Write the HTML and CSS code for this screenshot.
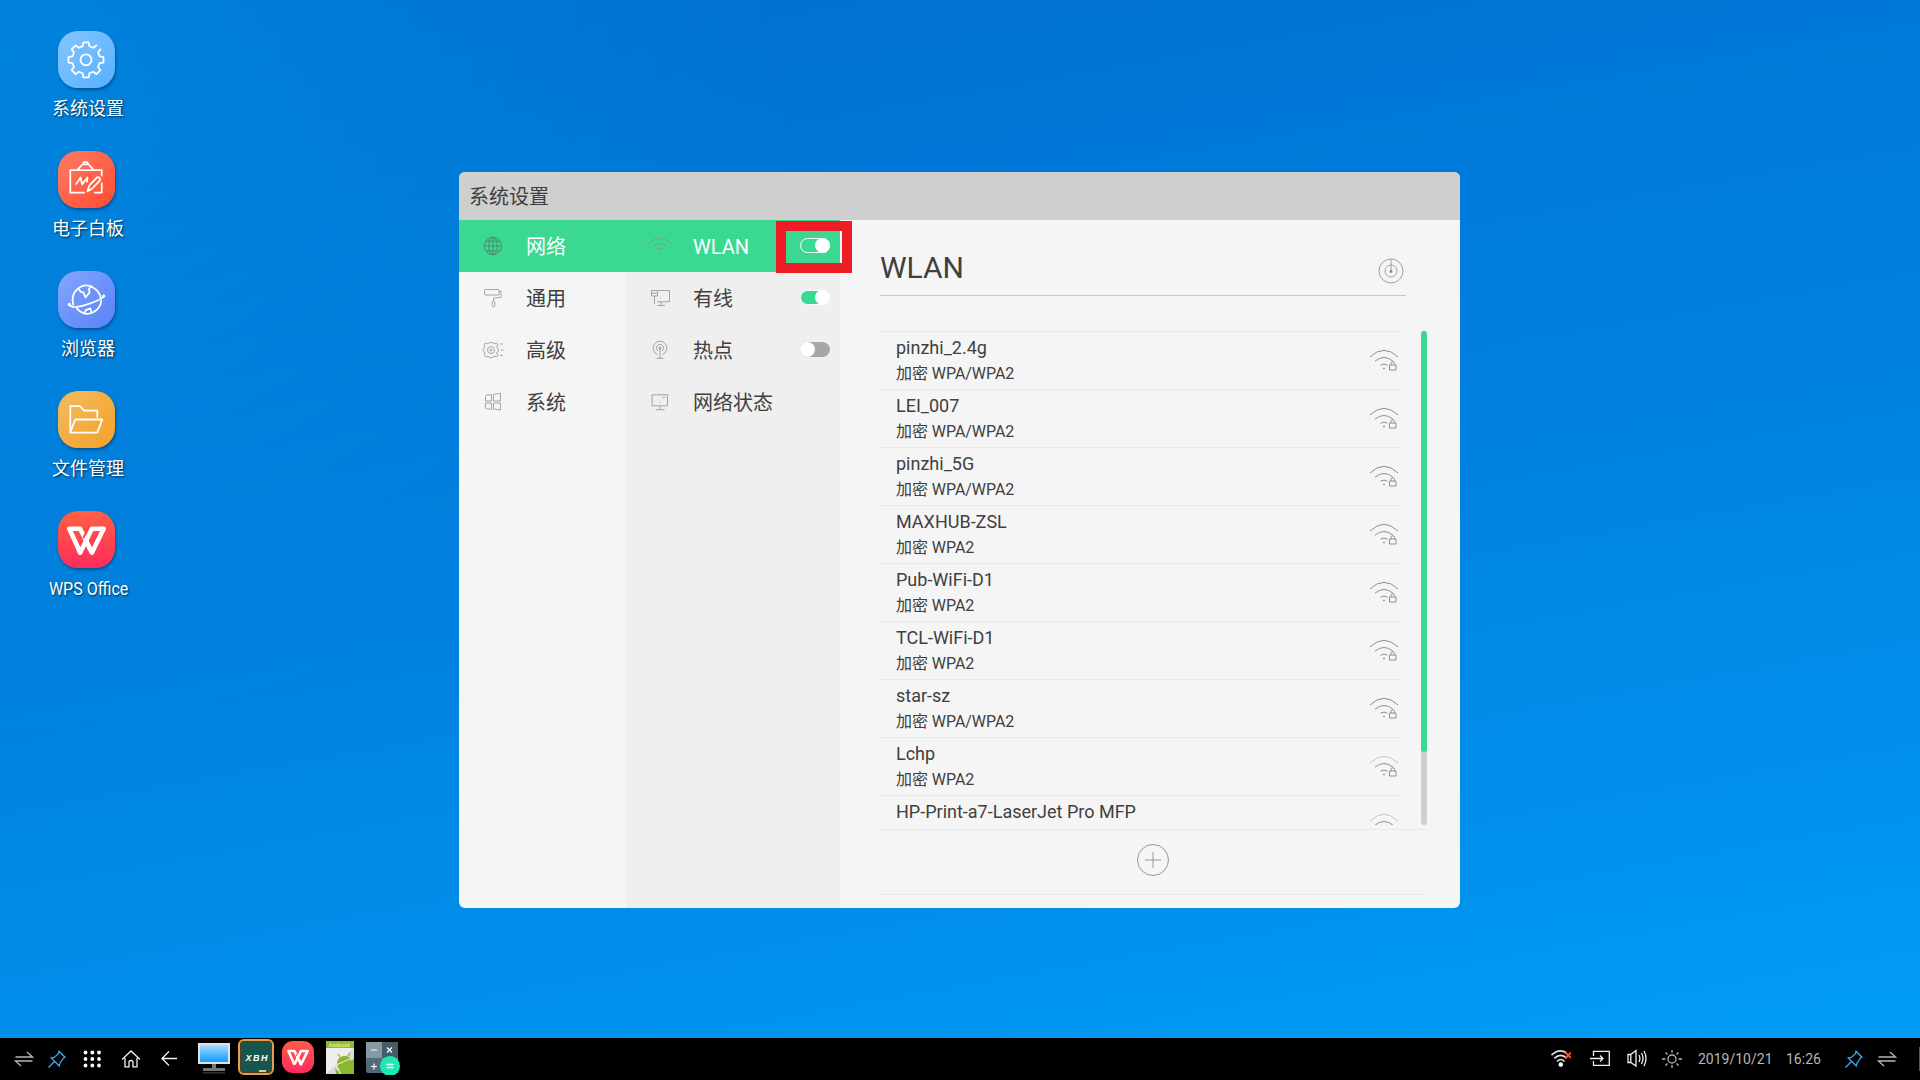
FILE: index.html
```html
<!DOCTYPE html>
<html lang="zh-CN">
<head>
<meta charset="utf-8">
<title>系统设置</title>
<link rel="stylesheet" href="styles.css">
</head>
<body>
<svg class="defs" aria-hidden="true">
  <symbol id="wifi-lock" viewBox="0 0 30 22">
    <path class="far" d="M1 8Q15-5.400 29 8"/>
    <path d="M6 12.200Q15 4.800 24 12.200M11.500 16.200Q15 14 18.500 16.200"/>
    <circle cx="15" cy="19.500" r=".6"/>
    <path d="M20.500 16h6.500v5h-6.500zM22 16v-1.500q0-1.700 1.750-1.700t1.750 1.700V16"/>
  </symbol>
  <symbol id="swap" viewBox="0 0 20 20"><path d="M1.500 8h17L13 3M18.500 12H1.500L7 17"/></symbol>
  <symbol id="pin" viewBox="0 0 20 20"><path d="M12 2.200l6 6-1.700 1-3.300 5-.8 2.800-8-8 3-.6 4.200-3.700zM7.500 12.500L1.500 18.500"/></symbol>
  <symbol id="wps" viewBox="0 0 58 58">
    <g fill="none" stroke="#fff" stroke-width="4.600" stroke-linejoin="round">
      <path d="M34.500 42L22.500 18H11.500L22.500 42"/>
      <path d="M31.500 16L26 27" stroke="#fb4a49" stroke-width="2"/>
      <path d="M22.500 42.500L34.500 18H46.500L34.500 42.500L31 35.500M22.500 42.500L21 39"/>
    </g>
  </symbol>
</svg>
<main class="desktop">
  <nav class="shortcuts">
    <a class="shortcut"><span class="tile tile-settings"><svg viewBox="0 0 58 58"><g transform="translate(28.500 29.300)"><path d="M14.600-10.600L12.200-7.400L13.800-3.400L17.800-2.800V2.800L13.800 3.400L12.200 7.400L14.600 10.600L10.600 14.600L7.400 12.200L3.400 13.800L2.800 17.800H-2.800L-3.400 13.800L-7.400 12.200L-10.600 14.600L-14.600 10.600L-12.200 7.400L-13.800 3.400L-17.800 2.800V-2.800L-13.800-3.400L-12.200-7.400L-14.600-10.600L-10.600-14.600L-7.400-12.200L-3.400-13.800L-2.800-17.800H2.800L3.400-13.800L7.400-12.200L10.600-14.600"/><circle r="5.600"/></g></svg></span><span class="label">系统设置</span></a>
    <a class="shortcut"><span class="tile tile-board"><svg viewBox="0 0 58 58"><path d="M44.500 25v-5.500h-32v22.800h14M44.500 33v9.300h-7M20 19l5-5.500h6l5 5.500M25.500 13.500q0-2.500 2.500-2.500t2.500 2.500M18.500 33.500l4.500-6.500 1.500 7 5.500-7-.5 4.500M30 41l2-6 7.500-8q1.500-.8 2.700.4t.3 2.700l-7.500 8z"/></svg></span><span class="label">电子白板</span></a>
    <a class="shortcut"><span class="tile tile-browser"><svg viewBox="0 0 58 58"><path d="M15.500 34Q13 25 19 19q8-7.500 17-2 6 3.500 7.500 10M19 38q8 8.500 17 4 7-3.500 8-11.500M11.500 34.500q3 4 15 .5 17-5 20-9M21 18l2 3 3 1 2 5 4-5-.5-4 3-2.500M27 43l1-3 5-2 1 4"/><circle cx="11.500" cy="34" r=".8"/><circle cx="46.500" cy="25.500" r=".8"/></svg></span><span class="label">浏览器</span></a>
    <a class="shortcut"><span class="tile tile-files"><svg viewBox="0 0 58 58"><path d="M12.500 42V15.500h10l4 4.500H40v6.500M12.500 42.300l5-13.300H45l-5 13.300z"/></svg></span><span class="label">文件管理</span></a>
    <a class="shortcut"><span class="tile tile-wps"><svg><use href="#wps"/></svg></span><span class="label condensed">WPS Office</span></a>
  </nav>

  <section class="window">
    <header class="titlebar">系统设置</header>
    <div class="panes">
      <nav class="menu menu-main">
        <a class="item active"><svg class="ico" viewBox="0 0 22 22"><circle cx="11" cy="11" r="8.700"/><ellipse cx="11" cy="11" rx="4.300" ry="8.700"/><path d="M11 2.300v17.400M2.300 11h17.400M4 6.200h14M4 15.800h14"/></svg><span>网络</span></a>
        <a class="item"><svg class="ico" viewBox="0 0 22 22"><rect x="2.500" y="2.500" width="14.500" height="5.500" rx="1"/><path d="M17 4h2v6.300l-7.500 1V14M11.500 14q1.500 0 1.500 3t-1.500 3-1.500-3 1.500-3z"/></svg><span>通用</span></a>
        <a class="item"><svg class="ico" viewBox="0 0 22 22"><path d="M14.500 8l1.500-2-1.500-2-2.500 1-1.200-1.500H7.200L6 5 3.500 4 2 6.500 3 8 .8 11 3 14l-1 1.500L3.500 18 6 17l1.200 1.500h3.600L12 17l2.500 1 1.500-2-1.500-2L17 11zM18 5h3M19 11h2.500M18 16.500h3"/><circle cx="9" cy="11" r="3.500"/><circle cx="9" cy="11" r="1"/></svg><span>高级</span></a>
        <a class="item"><svg class="ico" viewBox="0 0 22 22"><path d="M3.500 5.500q0-1 1-1.200L9.500 3.500V10h-6zM11.500 3.300l7-1V10h-7zM3.500 12h6v6.300l-5-.6q-1-.2-1-1.200zM11.500 12h7v7l-7-1z"/></svg><span>系统</span></a>
      </nav>
      <nav class="menu menu-sub">
        <a class="item active"><svg class="ico faint" viewBox="0 0 22 22"><path d="M0.500 7.500Q11-1 21.500 7.500M4.500 11Q11 6 17.500 11M8 14q3-1.500 6 0"/><circle cx="11" cy="17.500" r=".4"/></svg><span class="latin">WLAN</span><i class="switch on-active"></i></a>
        <a class="item"><svg class="ico" viewBox="0 0 22 22"><path d="M9 3.500h11.500v11.300H8M2.500 3.500h6V9h-6zM2.500 6.200h6M5.500 9v8M12 15v3M8 18.500h8M11.500 10.800h.8"/></svg><span>有线</span><i class="switch on"></i></a>
        <a class="item"><svg class="ico" viewBox="0 0 22 22"><path d="M8.500 15.500A6.900 6.900 0 1 1 13.500 15.500M9 12a3.600 3.600 0 1 1 4 0M11 9v10M7.500 19.300h7"/><circle cx="11" cy="8.900" r="1"/></svg><span>热点</span><i class="switch"></i></a>
        <a class="item"><svg class="ico" viewBox="0 0 22 22"><path d="M3 3.800h15.500v11H3zM11 15v3.500M7 18.700h8.500M13.500 6.500h1.500M16 5.800v1M10.500 11h1"/></svg><span>网络状态</span></a>
      </nav>
      <section class="detail">
        <header class="detail-head"><h1>WLAN</h1><svg class="radar" viewBox="0 0 28 28"><circle cx="14" cy="14" r="12"/><circle cx="14" cy="14" r="6"/><path d="M14 2v12"/><circle class="dot" cx="14" cy="14.500" r="1.400"/></svg></header>
        <div class="scroller">
          <ul class="networks">
            <li><div><b>pinzhi_2.4g</b><small>加密 WPA/WPA2</small></div><svg class="signal"><use href="#wifi-lock"/></svg></li>
            <li><div><b>LEI_007</b><small>加密 WPA/WPA2</small></div><svg class="signal"><use href="#wifi-lock"/></svg></li>
            <li><div><b>pinzhi_5G</b><small>加密 WPA/WPA2</small></div><svg class="signal"><use href="#wifi-lock"/></svg></li>
            <li><div><b>MAXHUB-ZSL</b><small>加密 WPA2</small></div><svg class="signal"><use href="#wifi-lock"/></svg></li>
            <li><div><b>Pub-WiFi-D1</b><small>加密 WPA2</small></div><svg class="signal"><use href="#wifi-lock"/></svg></li>
            <li><div><b>TCL-WiFi-D1</b><small>加密 WPA2</small></div><svg class="signal"><use href="#wifi-lock"/></svg></li>
            <li><div><b>star-sz</b><small>加密 WPA/WPA2</small></div><svg class="signal"><use href="#wifi-lock"/></svg></li>
            <li><div><b>Lchp</b><small>加密 WPA2</small></div><svg class="signal weak"><use href="#wifi-lock"/></svg></li>
            <li><div><b>HP-Print-a7-LaserJet Pro MFP</b></div><svg class="signal weak"><use href="#wifi-lock"/></svg></li>
          </ul>
          <div class="track"><div class="thumb"></div></div>
        </div>
        <footer class="add"><svg viewBox="0 0 34 34"><circle cx="17" cy="17" r="15.500"/><path d="M9 17h16M17 9v16"/></svg></footer>
      </section>
    </div>
    <div class="callout"></div>
  </section>
</main>

<footer class="taskbar">
  <div class="keys">
    <svg class="key dim"><use href="#swap"/></svg>
    <svg class="key blue"><use href="#pin"/></svg>
    <svg class="key solid" viewBox="0 0 20 20"><circle cx="3.500" cy="3.500" r="1.900"/><circle cx="10.300" cy="3.500" r="1.900"/><circle cx="17" cy="3.500" r="1.900"/><circle cx="3.500" cy="10" r="1.900"/><circle cx="10.300" cy="10" r="1.900"/><circle cx="17" cy="10" r="1.900"/><circle cx="3.500" cy="16.500" r="1.900"/><circle cx="10.300" cy="16.500" r="1.900"/><circle cx="17" cy="16.500" r="1.900"/></svg>
    <svg class="key home" viewBox="0 0 20 20"><path d="M1 10.500l9-8.500 9 8.500M4 9v8.800h4v-4.300q0-2 2-2t2 2v4.300h4V9"/></svg>
    <svg class="key back" viewBox="0 0 20 20"><path d="M18 9.500H3M10 2.500L3 9.500l7 7"/></svg>
  </div>
  <div class="apps">
    <svg viewBox="0 0 36 36"><defs><linearGradient id="screen" x2="0" y2="1"><stop stop-color="#a8dcff"/><stop offset=".6" stop-color="#45b5ff"/><stop offset="1" stop-color="#179bff"/></linearGradient></defs><path d="M2 4h32v21H2z" fill="#dfe3e4"/><path d="M4 6h28v17H4z" fill="url(#screen)"/><path d="M16 25h4v4h-4z" fill="#777"/><path d="M7 29h22v3H7z" fill="#777"/><path d="M7 33h22v1.500H7z" fill="#333"/></svg>
    <svg viewBox="0 0 36 36"><rect x="1" y="1" width="34" height="34" rx="5" fill="#17564f" stroke="#e5a047" stroke-width="2"/><rect x="2.600" y="2.600" width="30.800" height="30.800" rx="3" fill="none" stroke="#5d3b17"/><path d="M21 32h7" stroke="#d8c9a2" stroke-width="2"/><text class="chalk" x="18.500" y="22" textLength="22">XBH</text></svg>
    <svg viewBox="0 0 36 36"><defs><linearGradient id="red" x2="0" y2="1"><stop stop-color="#ff5c45"/><stop offset="1" stop-color="#ff2b5f"/></linearGradient></defs><rect x="2" y="2" width="32" height="32" rx="11" fill="url(#red)"/><use href="#wps" x="2" y="2" width="32" height="32"/></svg>
    <svg viewBox="0 0 36 36"><path d="M4 2h28v33H4z" fill="#eee"/><path d="M4 2h28v7H4z" fill="#8fbd22"/><text class="droid" x="17" y="8.300">Android</text><path d="M4 35L32 9v26z" fill="#d3d3d3" opacity=".7"/><path d="M15 25q0-7 6.500-8 5-.5 7.500 3l-1 2 4-2v15H19z" fill="#8bb82b"/><path d="M14 26l16-7" stroke="#eee"/><path d="M18 18l-2-3M26 17l2-3" stroke="#8bb82b" stroke-width="1.200"/><path d="M14 35l-1-6 4 4v2z" fill="#8bb82b"/></svg>
    <svg viewBox="0 0 36 36"><path d="M2 3h16v16H2z" fill="#8799a5"/><path d="M18 3h16v16H18z" fill="#455d6b"/><path d="M2 19h16v15H4q-2 0-2-2z" fill="#526b79"/><path d="M18 19h16v15H18z" fill="#7a8f9c"/><path d="M7 11h6M7 27.500h6M10 24.500v6M23 8.500l5 5M28 8.500l-5 5" stroke="#fff" stroke-width="1.200"/><circle cx="26" cy="27" r="10" fill="#1de9b6"/><path d="M22.500 25.500h7M22.500 28.500h7" stroke="#fff" stroke-width="1.300"/></svg>
  </div>
  <div class="status">
    <svg class="key" viewBox="0 0 20 20"><path d="M0.500 6Q8.500-1 15.500 4M3.300 9.300q6.500-6 12.500 0M6 12.500q4-4 7.500 0" class="thick"/><circle cx="9.800" cy="15.500" r="1.700" fill="#fff"/><path d="M14.500 3.500l5.500 5.500M20 3.500L14.500 9" class="off"/></svg>
    <svg class="key input" viewBox="0 0 20 20"><path d="M3.500 7V2.300h15.800v14H3.500V12M0 9.500h13M10 6.500l3 3-3 3"/></svg>
    <svg class="key sound" viewBox="0 0 20 20"><path d="M1 5.500h2.800v8H1zM3.800 5.500L9 1.500v15.500l-5.200-3.500M12 6q1.800 3.500 0 7M14.500 4q3 5.500 0 11M17 2q4 7.500 0 15"/></svg>
    <svg class="key dim light" viewBox="0 0 20 20"><circle cx="10" cy="10" r="4"/><path d="M10 1v3M10 16v3M0 10h3.500M16.500 10H20M3.500 3.500l2 2M16.500 3.500l-2 2M3.500 16.500l2-2M16.500 16.500l-2-2"/></svg>
    <span class="date">2019/10/21</span><span class="time">16:26</span>
    <svg class="key blue"><use href="#pin"/></svg>
    <svg class="key dim last"><use href="#swap"/></svg>
    <i class="edge"></i>
  </div>
</footer>
</body>
</html>
```
FILE: styles.css
```css
* { box-sizing: border-box; }
body {
  margin: 0;
  width: 1920px;
  height: 1080px;
  overflow: hidden;
  display: flex;
  flex-direction: column;
  font-family: Roboto, "Noto Sans CJK SC", sans-serif;
  color: #404040;
}
svg { display: block; fill: none; flex: none; }
.defs { display: none; }

.desktop {
  height: 1038px;
  display: flex;
  align-items: flex-start;
  background:
    radial-gradient(ellipse 800px 700px at 0 5%, rgba(0, 138, 226, .75), rgba(0, 136, 222, 0)),
    linear-gradient(170deg, #006dcb 0%, #0078d7 25%, #0081de 50%, #008eea 75%, #009df6 100%);
}

.shortcuts { width: 459px; padding: 31px 0 0 28px; }
.shortcut {
  width: 120px;
  height: 120px;
  display: flex;
  flex-direction: column;
  align-items: center;
}
.tile {
  width: 57px;
  height: 57px;
  margin-right: 3px;
  border-radius: 20px;
  box-shadow: 1px 2px 3px rgba(0, 30, 70, .45);
}
.tile svg {
  width: 57px;
  height: 57px;
  stroke: #fff;
  stroke-width: 1.8;
  stroke-linejoin: round;
  stroke-linecap: round;
}
.tile-settings { background: linear-gradient(135deg, #83c5ff, #58b0ff); }
.tile-board { background: linear-gradient(135deg, #ff7b65, #ff4c30); }
.tile-browser { background: linear-gradient(135deg, #84a6ff, #5882f7); }
.tile-files { background: linear-gradient(135deg, #f4bb62, #f3a125); }
.tile-wps { background: linear-gradient(#ff6142, #ff2b5e); }
.label {
  margin-top: 8px;
  font-size: 18px;
  line-height: 26px;
  color: #fff;
  white-space: nowrap;
  text-shadow: 1px 1px 2px rgba(0, 0, 0, .7);
}
.condensed { margin-left: 1px; transform: scaleX(.89); }

.window {
  position: relative;
  width: 1001px;
  height: 736px;
  margin-top: 172px;
  border-radius: 6px;
  overflow: hidden;
  background: #f5f5f5;
}
.titlebar {
  height: 48px;
  padding-left: 10px;
  background: #cfcfcf;
  font-size: 20px;
  line-height: 50px;
}
.panes { display: flex; height: 688px; }
.menu-main { width: 167px; }
.menu-sub { width: 214px; background: #efefef; }
.item {
  height: 52px;
  display: flex;
  align-items: center;
  padding: 0 10px 1px 23px;
  font-size: 20px;
  line-height: 30px;
}
.item span { padding-top: 2px; }
.item .latin { padding-top: 3px; }
.active { background: #3bd891; color: #fff; }
.ico {
  width: 22px;
  height: 22px;
  margin-right: 22px;
  stroke: #909090;
  stroke-width: .8;
}
.active .ico { stroke: #4f7f68; }
.active .faint { stroke: #7d9a83; }
.switch {
  width: 30px;
  height: 15px;
  margin-left: auto;
  border-radius: 8px;
  background: #a7a7a7;
}
.switch::after {
  content: "";
  display: block;
  width: 15px;
  height: 15px;
  border-radius: 50%;
  background: #fff;
}
.on { background: #3bd891; border: 1px solid #fff; }
.on::after { margin: -1px 0 0 14px; }
.on-active { background: none; border: 1px solid #fff; }
.on-active::after { margin: -1px 0 0 14px; }

.detail { width: 620px; padding: 0 33px 0 40px; }
.detail-head {
  width: 526px;
  height: 76px;
  padding: 20px 1px 0 0;
  display: flex;
  justify-content: space-between;
  border-bottom: 1px solid #c8c8c8;
}
h1 { margin: 10px 0 0; font-size: 30px; line-height: 36px; font-weight: 400; }
.radar { width: 28px; height: 28px; margin-top: 17px; stroke: #a0a0a0; }
.radar .dot { fill: #888; stroke: none; }
.scroller {
  height: 494px;
  margin-top: 35px;
  display: flex;
  justify-content: space-between;
}
.networks {
  width: 522px;
  margin: 0;
  padding: 0;
  list-style: none;
  overflow: hidden;
}
.networks li {
  height: 58px;
  padding: 4px 3px 0 16px;
  display: flex;
  justify-content: space-between;
  border-top: 1px solid #eaeaea;
}
b, small { display: block; font-weight: 400; }
b { font-size: 18px; line-height: 24px; }
small { font-size: 16px; line-height: 28px; letter-spacing: -.05px; }
.signal { width: 30px; height: 22px; margin-top: 13px; stroke: #8f8f8f; stroke-width: 1; }
.weak { --far: .45; }
.far { stroke-opacity: var(--far, 1); }
.track { width: 6px; background: #cfcfcf; border-radius: 3px; }
.thumb { height: 421px; background: #3bd891; border-radius: 3px; }
.add {
  height: 66px;
  margin-top: 4px;
  padding-right: 2px;
  display: flex;
  justify-content: center;
  border-top: 1px solid #eaeaea;
  border-bottom: 1px solid #eaeaea;
}
.add svg { width: 34px; height: 34px; margin-top: 13px; stroke: #999; }
.callout {
  position: absolute;
  left: 317px;
  top: 49px;
  width: 76px;
  height: 52px;
  border: 10px solid #ee1c24;
}

.taskbar { height: 42px; display: flex; background: #000; }
.keys { width: 196px; padding-left: 14px; display: flex; }
.keys .key + .key { margin-left: 13px; }
.keys .solid.solid { margin-left: 15px; }
.keys .home.home { margin-left: 19px; }
.keys .back.back { margin-left: 18px; }
.key { width: 20px; height: 20px; margin-top: 11px; stroke: #f2f2f2; stroke-width: 1.300; }
.key.dim { stroke: #b5b5b5; }
.key.blue { stroke: #40a9f0; }
.key.solid { fill: #fff; stroke: none; }
.thick { stroke-width: 1.700; stroke: #ddd; }
.off { stroke: #ff4a32; stroke-width: 2; }
.apps { display: flex; gap: 6px; padding-top: 1px; }
.apps svg { width: 36px; height: 36px; }
.chalk { font: italic bold 9px "Liberation Sans", sans-serif; fill: #fff; text-anchor: middle; }
.droid { font: bold 5.500px "Liberation Sans", sans-serif; fill: #dcef9c; text-anchor: middle; }
.status { display: flex; margin-left: auto; width: 369px; font-size: 14px; line-height: 42px; color: #b8b8b8; }
.input { margin-left: 19px; }
.sound { margin-left: 17px; }
.light { margin-left: 15px; }
.date { margin-left: 16px; width: 88px; }
.time { width: 58px; }
.last { margin-left: 13px; }
.edge { width: 1px; height: 24px; margin: 9px 0 0 auto; background: #555; }
```
